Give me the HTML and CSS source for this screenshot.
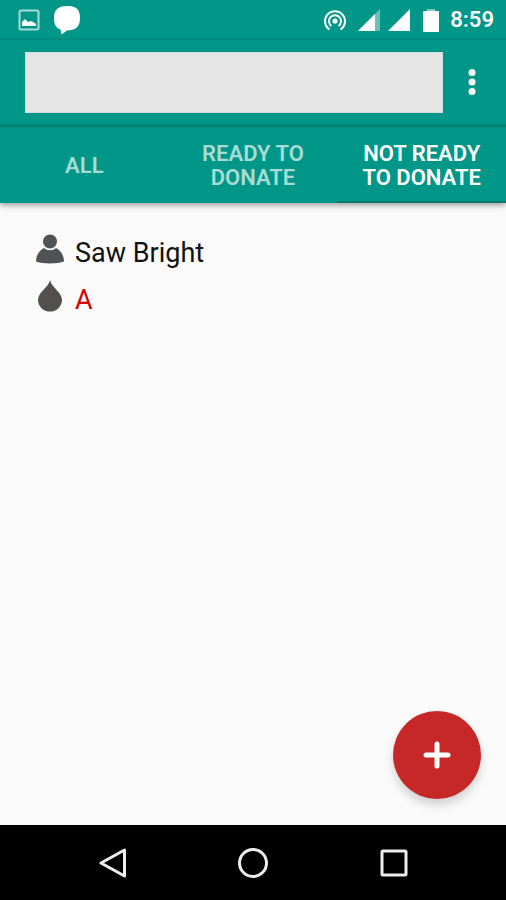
FILE: index.html
```
<!DOCTYPE html>
<html lang="en">
<head>
    <meta charset="UTF-8">
    <meta name="viewport" content="width=device-width, initial-scale=1.0">
    <title>Blood Donors</title>
    <link rel="stylesheet" href="styles.css">
</head>
<body>
    <div class="status-bar">
        <svg class="icon-picture" width="22" height="22" viewBox="0 0 22 22">
            <rect x="1.5" y="1.5" width="19" height="19" rx="1.5" fill="none" stroke="#a6dcd5" stroke-width="2"/>
            <path d="M4 17v-4l3-3 3 3 3-1 2 1 3 2v2z" fill="#fff"/>
        </svg>
        <svg class="icon-chat" width="28" height="30" viewBox="0 0 28 30">
            <path d="M14 1C22 1 27 3 27 13S22 25 14 25.500L8.500 29.500 7.500 24.500C3 23 1 20 1 13 1 4 6 1 14 1z" fill="#fff"/>
        </svg>
        <div class="status-right">
            <svg width="24" height="22" viewBox="0 0 24 22">
                <g fill="none" stroke="#fff" stroke-width="2">
                    <path d="M6.500 20.500A10 10 0 1 1 17.500 20.500"/>
                    <path d="M8.500 17A6 6 0 1 1 15.500 17"/>
                </g>
                <circle cx="12" cy="12" r="2.600" fill="#fff"/>
            </svg>
            <svg class="icon-signal" width="24" height="24" viewBox="0 0 24 24">
                <path d="M1 23L23 1v22z" fill="#6bc1b8"/>
                <path d="M1 23L18 6v17z" fill="#fff"/>
            </svg>
            <svg class="icon-signal" width="24" height="24" viewBox="0 0 24 24">
                <path d="M1 23L23 1v22z" fill="#fff"/>
            </svg>
            <svg class="icon-battery" width="16" height="24" viewBox="0 0 16 24">
                <path d="M4 1h8v3H4z" fill="#80cbc4"/>
                <rect y="3" width="16" height="21" rx="1" fill="#fff"/>
            </svg>
            <span class="clock">8:59</span>
        </div>
    </div>

    <header class="toolbar">
        <input type="text" class="search" aria-label="Search">
        <button class="menu" aria-label="More options">
            <svg width="8" height="28" viewBox="0 0 8 28" fill="#fff">
                <circle cx="4" cy="4.500" r="3.500"/>
                <circle cx="4" cy="14" r="3.500"/>
                <circle cx="4" cy="23.500" r="3.500"/>
            </svg>
        </button>
    </header>

    <nav class="tabs">
        <button class="tab">ALL</button>
        <button class="tab">READY TO<br>DONATE</button>
        <button class="tab active">NOT READY<br>TO DONATE</button>
    </nav>

    <main class="content">
        <div class="donor">
            <div class="row">
                <svg width="28" height="30" viewBox="0 0 28 30" fill="#4f5355">
                    <circle cx="14" cy="7.500" r="7"/>
                    <path d="M0 27.500C0 21 4 16 8 14c3 3 9 3 12 0 4 2 8 7 8 13.500-6 2.500-22 2.500-28 0z"/>
                </svg>
                <span>Saw Bright</span>
            </div>
            <div class="row">
                <svg width="28" height="32" viewBox="0 0 28 32" fill="#544f4f">
                    <path d="M14 0C15 7 26 12 26 20a12 11.500 0 0 1-24 0C2 12 13 7 14 0z"/>
                </svg>
                <span class="blood">A</span>
            </div>
        </div>
        <button class="fab" aria-label="Add donor">
            <svg width="28" height="28" viewBox="0 0 28 28">
                <path d="M14 3v22M3 14h22" stroke="#fff" stroke-width="5" stroke-linecap="round"/>
            </svg>
        </button>
    </main>

    <div class="nav-bar">
        <button aria-label="Back">
            <svg width="30" height="30" viewBox="0 0 30 30">
                <path d="M4 15L27.500 2v26z"/>
            </svg>
        </button>
        <button aria-label="Home">
            <svg width="30" height="30" viewBox="0 0 30 30">
                <circle cx="15" cy="15" r="13.500"/>
            </svg>
        </button>
        <button aria-label="Recent apps">
            <svg width="30" height="30" viewBox="0 0 30 30">
                <rect x="3" y="3" width="24" height="24" rx="1"/>
            </svg>
        </button>
    </div>
</body>
</html>
```
FILE: styles.css
```
* {
    box-sizing: border-box;
}
body {
    margin: 0;
    min-height: 100vh;
    display: flex;
    flex-direction: column;
    background: #fafafa;
    color: #111;
    font-family: Roboto, sans-serif;
}
button {
    padding: 0;
    border: none;
    background: none;
    color: inherit;
    font-family: inherit;
    cursor: pointer;
}
svg {
    display: block;
    flex-shrink: 0;
}
.status-bar {
    display: flex;
    align-items: center;
    height: 40px;
    padding: 2px 12px 0 18px;
    background: #009688;
    border-bottom: 2px solid #008d80;
}
.icon-chat {
    margin-left: 13px;
}
.status-right {
    display: flex;
    align-items: center;
    margin-left: auto;
    color: #fff;
}
.icon-signal {
    margin-left: 10px;
}
.icon-signal + .icon-signal {
    margin-left: 6px;
}
.icon-battery {
    margin-left: 12px;
}
.clock {
    margin-left: 11px;
    font-size: 22px;
    font-weight: 600;
    line-height: 24px;
}
.toolbar {
    display: flex;
    align-items: center;
    height: 87px;
    padding: 0 20px 0 25px;
    background: #009688;
    border-bottom: 3px solid #00897c;
}
.search {
    flex: 1;
    min-width: 0;
    height: 61px;
    padding: 0 16px;
    border: 1px solid #d3e2df;
    background: #e5e5e5;
    font: 24px Roboto, sans-serif;
}
.menu {
    width: 28px;
    height: 48px;
    margin-left: 15px;
    display: flex;
    align-items: center;
    justify-content: center;
}
.tabs {
    display: grid;
    grid-template-columns: repeat(3, 1fr);
    height: 76px;
    background: #009688;
    box-shadow: 0 2px 6px rgba(0, 0, 0, 0.4);
}
.tab {
    padding-top: 4px;
    border-bottom: 2px solid transparent;
    color: #a6dcd5;
    font-size: 22px;
    font-weight: 600;
    line-height: 24px;
}
.tab.active {
    border-bottom-color: #00796b;
    color: #fff;
}
.content {
    flex: 1;
    display: flex;
    flex-direction: column;
    justify-content: space-between;
    padding: 26px 25px 26px 36px;
}
.row {
    display: flex;
    align-items: center;
    gap: 11px;
    height: 47px;
    font-size: 27px;
}
.row svg {
    margin-bottom: 7px;
}
.blood {
    color: #d50000;
}
.fab {
    align-self: flex-end;
    display: flex;
    align-items: center;
    justify-content: center;
    width: 88px;
    height: 88px;
    border-radius: 50%;
    background: #c62828;
    box-shadow: 0 6px 10px rgba(0, 0, 0, 0.16);
}
.nav-bar {
    display: flex;
    height: 75px;
    padding: 0 42px;
    background: #000;
}
.nav-bar button {
    flex: 1;
    display: flex;
    align-items: center;
    justify-content: center;
}
.nav-bar svg {
    fill: none;
    stroke: #eee;
    stroke-width: 3px;
    stroke-linejoin: round;
}
```
